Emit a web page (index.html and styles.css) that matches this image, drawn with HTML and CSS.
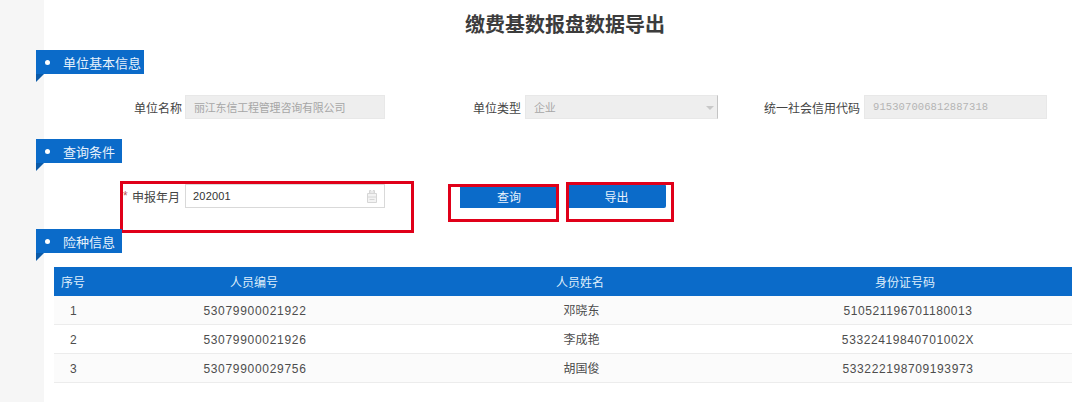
FILE: index.html
```html
<!DOCTYPE html>
<html lang="zh-CN">
<head>
<meta charset="utf-8">
<title>缴费基数报盘数据导出</title>
<link rel="stylesheet" href="styles.css">
</head>
<body>
<div class="page">
  <div class="gutter"></div>
  <main class="main">
    <h1 class="title">缴费基数报盘数据导出</h1>

    <div class="tag tag-wide"><span class="dot"></span><span>单位基本信息</span></div>
    <div class="row info-row">
      <label class="label l1">单位名称</label>
      <div class="field f1 readonly">丽江东信工程管理咨询有限公司</div>
      <label class="label l2">单位类型</label>
      <div class="field f2 readonly">企业<span class="caret"></span></div>
      <label class="label l3">统一社会信用代码</label>
      <div class="field f3 readonly code">915307006812887318</div>
    </div>

    <div class="tag tag-2"><span class="dot"></span><span>查询条件</span></div>
    <div class="row query-row">
      <span class="star">*</span>
      <label class="label l4">申报年月</label>
      <div class="field f4 value">202001
        <svg class="cal" width="12" height="16" viewBox="0 0 12 16"><path d="M1.5 5.5h9v9h-9zM3.5 5.5v-3h1.5v3M7 5.5v-3h1.5v3M1.5 9h9M3.5 11.5h5" fill="#f3f3f3" stroke="#d6d6d6" stroke-width="1"/></svg>
      </div>
      <button class="btn b1">查询</button>
      <button class="btn b2">导出</button>
      <span class="mark m1"></span>
      <span class="mark m2"></span>
      <span class="mark m3"></span>
    </div>

    <div class="tag tag-3"><span class="dot"></span><span>险种信息</span></div>
    <table class="grid">
      <thead>
        <tr><th class="c1">序号</th><th class="c2">人员编号</th><th class="c3">人员姓名</th><th class="c4">身份证号码</th></tr>
      </thead>
      <tbody>
        <tr class="odd first"><td class="c1">1</td><td class="d2">53079900021922</td><td class="d3">邓晓东</td><td class="d4">510521196701180013</td></tr>
        <tr><td class="c1">2</td><td class="d2">53079900021926</td><td class="d3">李成艳</td><td class="d4">53322419840701002X</td></tr>
        <tr class="odd"><td class="c1">3</td><td class="d2">53079900029756</td><td class="d3">胡国俊</td><td class="d4">533222198709193973</td></tr>
      </tbody>
    </table>
  </main>
</div>
</body>
</html>
```
FILE: styles.css
```css
* { box-sizing: border-box; }
html, body { margin: 0; padding: 0; background: #fff; overflow: hidden; }
body { font-family: "Liberation Sans", "Noto Sans CJK SC", sans-serif; font-size: 12px; color: #444; }

.page { display: flex; height: 402px; }
.gutter { width: 44px; flex: none; background: #f6f6f6; }
.main { flex: 1; min-width: 0; }

.title { margin: 0; padding: 11px 0 0 6px; height: 35px; line-height: 26px; text-align: center; font-size: 20px; font-weight: 700; color: #3c3c3c; font-family: "Noto Sans CJK SC", sans-serif; }

.tag { position: relative; display: flex; align-items: center; margin-left: -8px; height: 24px; background: #0b6bc9; color: #e6f1fb; font-family: "Noto Sans CJK SC", sans-serif; font-size: 13px; }
.tag::after { content: ""; position: absolute; left: 0; top: 24px; border-top: 8px solid #0b5aa8; border-left: 8px solid transparent; transform: scaleX(-1); }
.tag-wide { margin-top: 15px; width: 108px; }
.tag-2 { margin-top: 20px; width: 86px; }
.tag-3 { margin-top: 21px; width: 86px; }
.dot { width: 5px; height: 5px; border-radius: 50%; background: #fff; margin-left: 9px; margin-right: 13px; flex: none; }

.row { position: relative; display: flex; align-items: center; height: 24px; margin-top: 21px; }

.label { text-align: right; flex: none; font-family: "Noto Sans CJK SC", sans-serif; color: #444; }
.l1 { width: 138px; }
.l2 { width: 136px; }
.l3 { width: 142px; }
.l4 { width: 48px; }

.field { position: relative; height: 24px; padding-left: 8px; flex: none; font-size: 11px; }
.readonly { background: #eeeeee; color: #a6a6a6; font-family: "Noto Sans CJK SC", sans-serif; border: 1px solid #e8e8e8; line-height: 22px; letter-spacing: -0.2px; }
.f1 { width: 200px; margin-left: 3px; }
.f2 { width: 193px; margin-left: 4px; border-right-color: #c4c4c4; }
.f3 { width: 183px; margin-left: 4px; }
.code { font-family: "Liberation Mono", monospace; font-size: 10.5px; letter-spacing: 0.1px; color: #b4b4b4; }
.caret { position: absolute; right: 3px; top: 10px; border-top: 4px solid #c8c8c8; border-left: 4px solid transparent; border-right: 4px solid transparent; }

.star { margin-left: 79px; width: 9px; color: #b55; flex: none; font-size: 12px; }
.l4 { margin-right: 5px; }
.f4 { width: 200px; background: #fff; border: 1px solid #d9d9d9; color: #333; font-family: "Liberation Sans", sans-serif; font-size: 11px; letter-spacing: 0.2px; line-height: 22px; padding-left: 7px; }
.cal { position: absolute; right: 6px; top: 3px; }

.btn { height: 24px; border: 0; padding: 0; background: #0b6bc9; color: #e8f2fc; font-family: "Noto Sans CJK SC", sans-serif; font-size: 12px; flex: none; }
.b1 { width: 98px; margin-left: 75px; }
.b2 { width: 99px; margin-left: 9px; border-radius: 2px; }

.mark { position: absolute; border: 3px solid #e00019; pointer-events: none; }
.m1 { left: 76px; top: -3px; width: 294px; height: 52px; }
.m2 { left: 404px; top: 0; width: 111px; height: 38px; }
.m3 { left: 522px; top: -2px; width: 108px; height: 40px; }

.grid { margin: 14px 0 0 10px; width: 1018px; border-collapse: collapse; table-layout: fixed; }
.grid th { height: 29px; padding: 0; background: #0b6bc9; color: #dfeefb; font-weight: 400; font-family: "Noto Sans CJK SC", sans-serif; font-size: 12px; text-align: center; }
.grid td { height: 29px; padding: 2px 0 0; text-align: center; color: #4d4d4d; border-bottom: 1px solid #ececec; font-size: 12px; letter-spacing: 0.7px; }
.first td { height: 28px; }
.grid td.d2 { padding-left: 2px; }
.grid td.d3 { padding: 0 0 0 3px; letter-spacing: 0; font-family: "Noto Sans CJK SC", sans-serif; }
.grid td.d4 { padding-left: 6px; letter-spacing: 0.6px; }
.odd td { background: #fbfbfb; }
.c1 { width: 32px; }
.grid th.c1 { text-align: left; padding-left: 7px; }
.grid td.c1 { text-align: left; padding-left: 16px; }
.c2 { width: 336px; }
.c3 { width: 316px; }
.c4 { width: 334px; }
```
